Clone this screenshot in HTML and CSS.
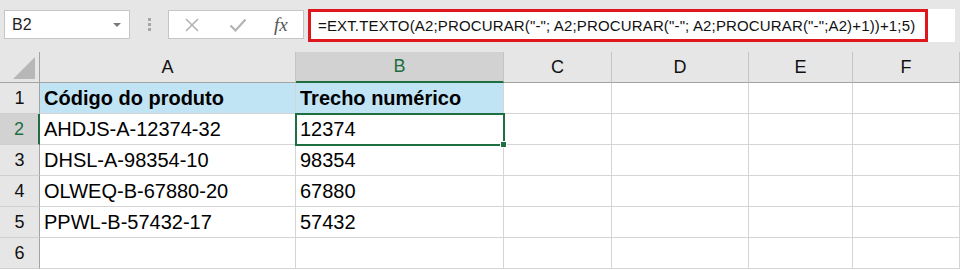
FILE: index.html
```html
<!DOCTYPE html>
<html lang="pt-BR">
<head>
    <meta charset="UTF-8">
    <title>Planilha - EXT.TEXTO</title>
    <link rel="stylesheet" href="styles.css">
</head>
<body>
    <!-- barra de fórmulas -->
    <div class="toolbar">
        <div class="name-box">
            <span>B2</span>
            <span class="caret"></span>
        </div>
        <div class="grip">
            <i></i><i></i><i></i>
        </div>
        <div class="fx-buttons">
            <svg class="btn-icon" width="16" height="16" viewBox="0 0 16 16">
                <path d="M2 2 L14 14 M14 2 L2 14" stroke="#b3b3b3" stroke-width="1.6" fill="none"/>
            </svg>
            <svg class="btn-icon" width="18" height="16" viewBox="0 0 18 16">
                <path d="M1.5 8.5 L6.5 13.5 L16.5 2.5" stroke="#b3b3b3" stroke-width="2.2" fill="none"/>
            </svg>
            <span class="fx">fx</span>
        </div>
        <div class="formula-bar">
            <div class="formula-text">=EXT.TEXTO(A2;PROCURAR("-"; A2;PROCURAR("-"; A2;PROCURAR("-";A2)+1))+1;5)</div>
        </div>
    </div>

    <!-- grade da planilha -->
    <div class="sheet">
        <div class="col-head corner"><span class="corner-tri"></span></div>
        <div class="col-head">A</div>
        <div class="col-head selected">B</div>
        <div class="col-head">C</div>
        <div class="col-head">D</div>
        <div class="col-head">E</div>
        <div class="col-head">F</div>

        <div class="row-head">1</div>
        <div class="cell head-fill bold">Código do produto</div>
        <div class="cell head-fill bold">Trecho numérico</div>
        <div class="cell"></div>
        <div class="cell"></div>
        <div class="cell"></div>
        <div class="cell"></div>

        <div class="row-head selected">2</div>
        <div class="cell">AHDJS-A-12374-32</div>
        <div class="cell active">12374<span class="fill-handle"></span></div>
        <div class="cell"></div>
        <div class="cell"></div>
        <div class="cell"></div>
        <div class="cell"></div>

        <div class="row-head">3</div>
        <div class="cell">DHSL-A-98354-10</div>
        <div class="cell">98354</div>
        <div class="cell"></div>
        <div class="cell"></div>
        <div class="cell"></div>
        <div class="cell"></div>

        <div class="row-head">4</div>
        <div class="cell">OLWEQ-B-67880-20</div>
        <div class="cell">67880</div>
        <div class="cell"></div>
        <div class="cell"></div>
        <div class="cell"></div>
        <div class="cell"></div>

        <div class="row-head">5</div>
        <div class="cell">PPWL-B-57432-17</div>
        <div class="cell">57432</div>
        <div class="cell"></div>
        <div class="cell"></div>
        <div class="cell"></div>
        <div class="cell"></div>

        <div class="row-head">6</div>
        <div class="cell"></div>
        <div class="cell"></div>
        <div class="cell"></div>
        <div class="cell"></div>
        <div class="cell"></div>
        <div class="cell"></div>
    </div>
</body>
</html>
```

FILE: styles.css
```css
/* reset */
* {
    margin: 0;
    padding: 0;
    box-sizing: border-box;
}

body {
    width: 960px;
    height: 270px;
    overflow: hidden;
    background: #ffffff;
    font-family: 'Liberation Sans', Arial, sans-serif;
    color: #000000;
}

/* barra de fórmulas */
.toolbar {
    height: 52px;
    background: #e6e6e6;
    display: flex;
    align-items: flex-start;
    padding: 10px 0 0 4px;
}

.name-box {
    width: 126px;
    height: 29px;
    background: #ffffff;
    border: 1px solid #c6c6c6;
    display: flex;
    align-items: center;
    justify-content: space-between;
    padding: 0 8px 0 7px;
    font-size: 16px;
    color: #222;
}

.caret {
    width: 0;
    height: 0;
    border-left: 4px solid transparent;
    border-right: 4px solid transparent;
    border-top: 4px solid #7a7a7a;
}

.grip {
    width: 38px;
    height: 29px;
    display: flex;
    flex-direction: column;
    align-items: center;
    justify-content: center;
    gap: 2px;
}

.grip i {
    display: block;
    width: 3px;
    height: 3px;
    background: #a6a6a6;
}

.fx-buttons {
    width: 136px;
    height: 29px;
    background: #ffffff;
    border: 1px solid #c6c6c6;
    display: flex;
    align-items: center;
    padding-left: 15px;
    gap: 29px;
}

.fx {
    font-family: 'Liberation Serif', 'Times New Roman', serif;
    font-style: italic;
    font-size: 19px;
    color: #555555;
    margin-left: -2px;
}

.formula-bar {
    flex: 1;
    height: 33px;
    margin: -1px 5px 0 4px;
    background: #ffffff;
}

.formula-text {
    width: 620px;
    height: 33px;
    border: 3px solid #e0161f;
    display: flex;
    align-items: center;
    padding-left: 7px;
    font-size: 15px;
    letter-spacing: 0.15px;
    color: #111;
    white-space: nowrap;
}

/* grade */
.sheet {
    display: grid;
    grid-template-columns: 40px 256px 208px 108px 137px 104px 107px;
    grid-auto-rows: 31px;
}

.col-head {
    background: #e6e6e6;
    border-right: 1px solid #c4c4c4;
    border-bottom: 1px solid #a3a3a3;
    display: flex;
    align-items: center;
    justify-content: center;
    font-size: 18px;
    color: #111;
}

.col-head.selected {
    background: #d2d2d2;
    color: #1e6e42;
    border-bottom: 2px solid #1e6e42;
}

.corner {
    position: relative;
    border-right-color: #a3a3a3;
}

.corner-tri {
    position: absolute;
    right: 4px;
    bottom: 3px;
    width: 0;
    height: 0;
    border-left: 22px solid transparent;
    border-bottom: 22px solid #b7b7b7;
}

.row-head {
    background: #e6e6e6;
    border-right: 1px solid #a3a3a3;
    border-bottom: 1px solid #cfcfcf;
    display: flex;
    align-items: center;
    justify-content: center;
    font-size: 18px;
    color: #111;
}

.row-head.selected {
    background: #d2d2d2;
    color: #1e6e42;
    border-right: 2px solid #1e6e42;
}

.cell {
    border-right: 1px solid #d4d4d4;
    border-bottom: 1px solid #d4d4d4;
    display: flex;
    align-items: center;
    padding: 1px 0 0 4px;
    font-size: 20px;
    white-space: nowrap;
}

.head-fill {
    background: #c1e4f5;
}

.bold {
    font-weight: bold;
}

.cell.active {
    position: relative;
    outline: 2px solid #1e6e42;
    outline-offset: -1px;
}

.fill-handle {
    position: absolute;
    right: -4px;
    bottom: -4px;
    width: 7px;
    height: 7px;
    background: #1e6e42;
    border: 1px solid #ffffff;
}
```
